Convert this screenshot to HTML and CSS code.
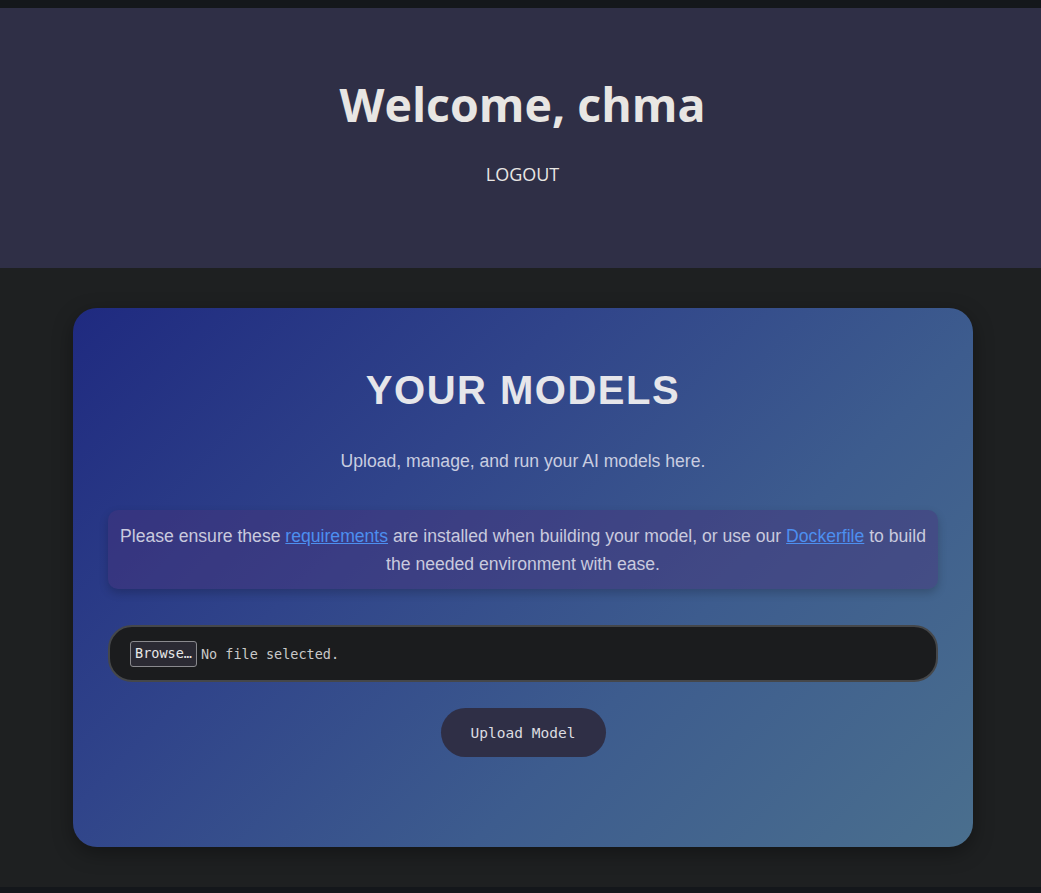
FILE: index.html
```html
<!DOCTYPE html>
<html lang="en">
<head>
<meta charset="utf-8">
<title>Your Models</title>
<link rel="stylesheet" href="styles.css">
</head>
<body>
<header class="top">
  <h1 class="welcome">Welcome, chma</h1>
  <a class="logout" href="#">LOGOUT</a>
</header>
<main class="main">
  <section class="card">
    <h2 class="card-title">YOUR MODELS</h2>
    <p class="subtitle">Upload, manage, and run your AI models here.</p>
    <div class="notice">Please ensure these <a href="#">requirements</a> are installed when building your model, or use our <a href="#">Dockerfile</a> to build the needed environment with ease.</div>
    <div class="file-field">
      <span class="browse">Browse…</span>
      <span class="file-status">No file selected.</span>
    </div>
    <div class="actions">
      <button class="upload" type="button">Upload Model</button>
    </div>
  </section>
</main>
</body>
</html>
```

FILE: styles.css
```css
html {
  background: #14171b;
}
body {
  margin: 8px 0 6px;
  background: #1e2021;
  font-family: "Liberation Sans", Arial, sans-serif;
}
.top {
  background: #2f2f46;
  height: 260px;
  display: flex;
  flex-direction: column;
  align-items: center;
  box-sizing: border-box;
  padding: 64px 0 0 4px;
}
.welcome {
  margin: 0;
  font-family: "Open Sans", sans-serif;
  font-weight: 700;
  font-size: 46.5px;
  line-height: 64px;
  color: #e8e6e3;
}
.logout {
  margin-top: 26px;
  font-family: "Open Sans", sans-serif;
  font-size: 18px;
  line-height: 24px;
  color: #e8e6e3;
  text-decoration: none;
}
.main {
  padding: 40px 68px 40px 73px;
}
.card {
  width: 900px;
  height: 539px;
  box-sizing: border-box;
  border-radius: 24px;
  padding: 56px 35px 0;
  background: linear-gradient(135deg, #1f2a80 0%, #30448a 35%, #3d5c8e 65%, #4a6f8e 100%);
  box-shadow: 0 6px 20px rgba(0, 0, 0, 0.35);
}
.card-title {
  margin: 0;
  text-align: center;
  font-family: "Liberation Sans", Arial, sans-serif;
  font-weight: 700;
  font-size: 40px;
  line-height: 52px;
  letter-spacing: 1.5px;
  color: #e6e6ea;
}
.subtitle {
  margin: 31px 0 0;
  text-align: center;
  font-size: 17.6px;
  line-height: 28px;
  color: #c9cde0;
}
.notice {
  margin-top: 35px;
  padding: 12px 10px 11px;
  border-radius: 10px;
  background: rgba(72, 52, 122, 0.45);
  box-shadow: 0 4px 10px rgba(0, 0, 0, 0.2);
  text-align: center;
  font-size: 17.6px;
  line-height: 28px;
  color: #c9cade;
}
.notice a {
  color: #4d8ff0;
}
.file-field {
  margin-top: 36px;
  height: 57px;
  box-sizing: border-box;
  border: 2px solid #45474a;
  border-radius: 24px;
  background: #1b1c1e;
  display: flex;
  align-items: center;
  padding-left: 20px;
  gap: 4px;
  font-family: "DejaVu Sans Mono", monospace;
  font-size: 13.5px;
  color: #c9c9c9;
}
.browse {
  border: 1px solid #8a8a8e;
  border-radius: 3px;
  background: #2b2a33;
  color: #e8e8e8;
  padding: 3px 4px 4px;
  line-height: 17px;
}
.actions {
  display: flex;
  justify-content: center;
  margin-top: 26px;
}
.upload {
  width: 165px;
  height: 49px;
  border: none;
  border-radius: 25px;
  background: #2f2f46;
  color: #dcdce0;
  font-family: "DejaVu Sans Mono", monospace;
  font-size: 14.5px;
}
```
